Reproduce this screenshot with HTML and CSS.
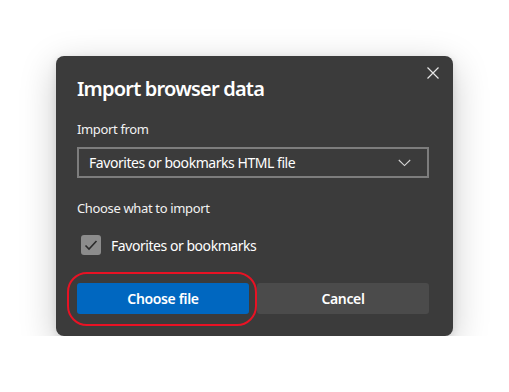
FILE: index.html
```html
<!DOCTYPE html>
<html lang="en">
<head>
    <meta charset="UTF-8">
    <meta name="viewport" content="width=device-width, initial-scale=1.0">
    <title>Import browser data</title>
    <link rel="stylesheet" href="styles.css">
</head>
<body>
    <div class="dialog">
        <button type="button" class="close-btn" aria-label="Close">
            <svg width="12" height="12" viewBox="0 0 12 12"><path d="M0.5 0.5 L11.5 11.5 M11.5 0.5 L0.5 11.5" stroke="#e6e6e6" stroke-width="1.2" fill="none"/></svg>
        </button>
        <h1>Import browser data</h1>

        <label class="field-label" for="importFrom">Import from</label>
        <div class="select">
            <span>Favorites or bookmarks HTML file</span>
            <svg width="13" height="8" viewBox="0 0 13 8"><path d="M0.8 1 L6.5 6.6 L12.2 1" stroke="#d6d6d6" stroke-width="1.1" fill="none"/></svg>
        </div>

        <div class="field-label second">Choose what to import</div>
        <div class="check-row">
            <span class="checkbox">
                <svg width="14" height="12" viewBox="0 0 14 12"><path d="M1.5 6.5 L5 10 L12.5 2" stroke="#2b2b2b" stroke-width="1.6" fill="none"/></svg>
            </span>
            <span>Favorites or bookmarks</span>
        </div>

        <div class="actions">
            <button type="button" class="primary-btn">Choose file</button>
            <button type="button" class="secondary-btn">Cancel</button>
            <div class="highlight"></div>
        </div>
    </div>
</body>
</html>
```

FILE: styles.css
```css
body {
    margin: 0;
    background: #ffffff;
    font-family: "Noto Sans", "Open Sans", sans-serif;
    color: #ffffff;
}
.dialog {
    position: relative;
    width: 397px;
    height: 280px;
    margin: 56px 0 0 56px;
    padding: 19px 24px 0 21px;
    box-sizing: border-box;
    background: #3b3b3b;
    border-radius: 8px;
    box-shadow: 0 10px 36px rgba(0, 0, 0, 0.22), 0 2px 8px rgba(0, 0, 0, 0.1);
}
.close-btn {
    position: absolute;
    top: 11px;
    right: 14px;
    width: 12px;
    height: 12px;
    padding: 0;
    border: none;
    background: none;
    display: flex;
}
h1 {
    margin: 0;
    font-size: 20px;
    line-height: 28px;
    font-weight: 600;
    letter-spacing: -0.8px;
}
.field-label {
    display: block;
    margin-top: 17px;
    font-size: 13px;
    line-height: 18px;
    letter-spacing: -0.35px;
    color: #f2f2f2;
}
.field-label.second {
    margin-top: 21px;
}
.select {
    margin-top: 9px;
    height: 31px;
    border: 2px solid #7d7d7d;
    box-sizing: border-box;
    display: flex;
    align-items: center;
    justify-content: space-between;
    padding: 0 16px 0 10px;
    font-size: 14px;
    letter-spacing: -0.45px;
}
.check-row {
    margin-top: 18px;
    margin-left: 4px;
    display: flex;
    align-items: center;
    gap: 10px;
    height: 20px;
    font-size: 14px;
    letter-spacing: -0.45px;
}
.checkbox {
    width: 20px;
    height: 20px;
    border-radius: 3px;
    background: #8c8c8c;
    display: flex;
    align-items: center;
    justify-content: center;
}
.actions {
    position: relative;
    margin-top: 28px;
    display: flex;
    gap: 8px;
}
.actions button {
    flex: 1;
    height: 31px;
    border: none;
    border-radius: 3px;
    color: #ffffff;
    font-family: inherit;
    font-size: 14px;
    font-weight: 600;
    letter-spacing: -0.35px;
}
.primary-btn {
    background: #0067c0;
}
.secondary-btn {
    background: #4b4b4b;
}
.highlight {
    position: absolute;
    left: -10px;
    top: -11px;
    width: 190px;
    height: 54px;
    border: 2px solid #e81224;
    border-radius: 20px;
    box-sizing: border-box;
    pointer-events: none;
}
```
